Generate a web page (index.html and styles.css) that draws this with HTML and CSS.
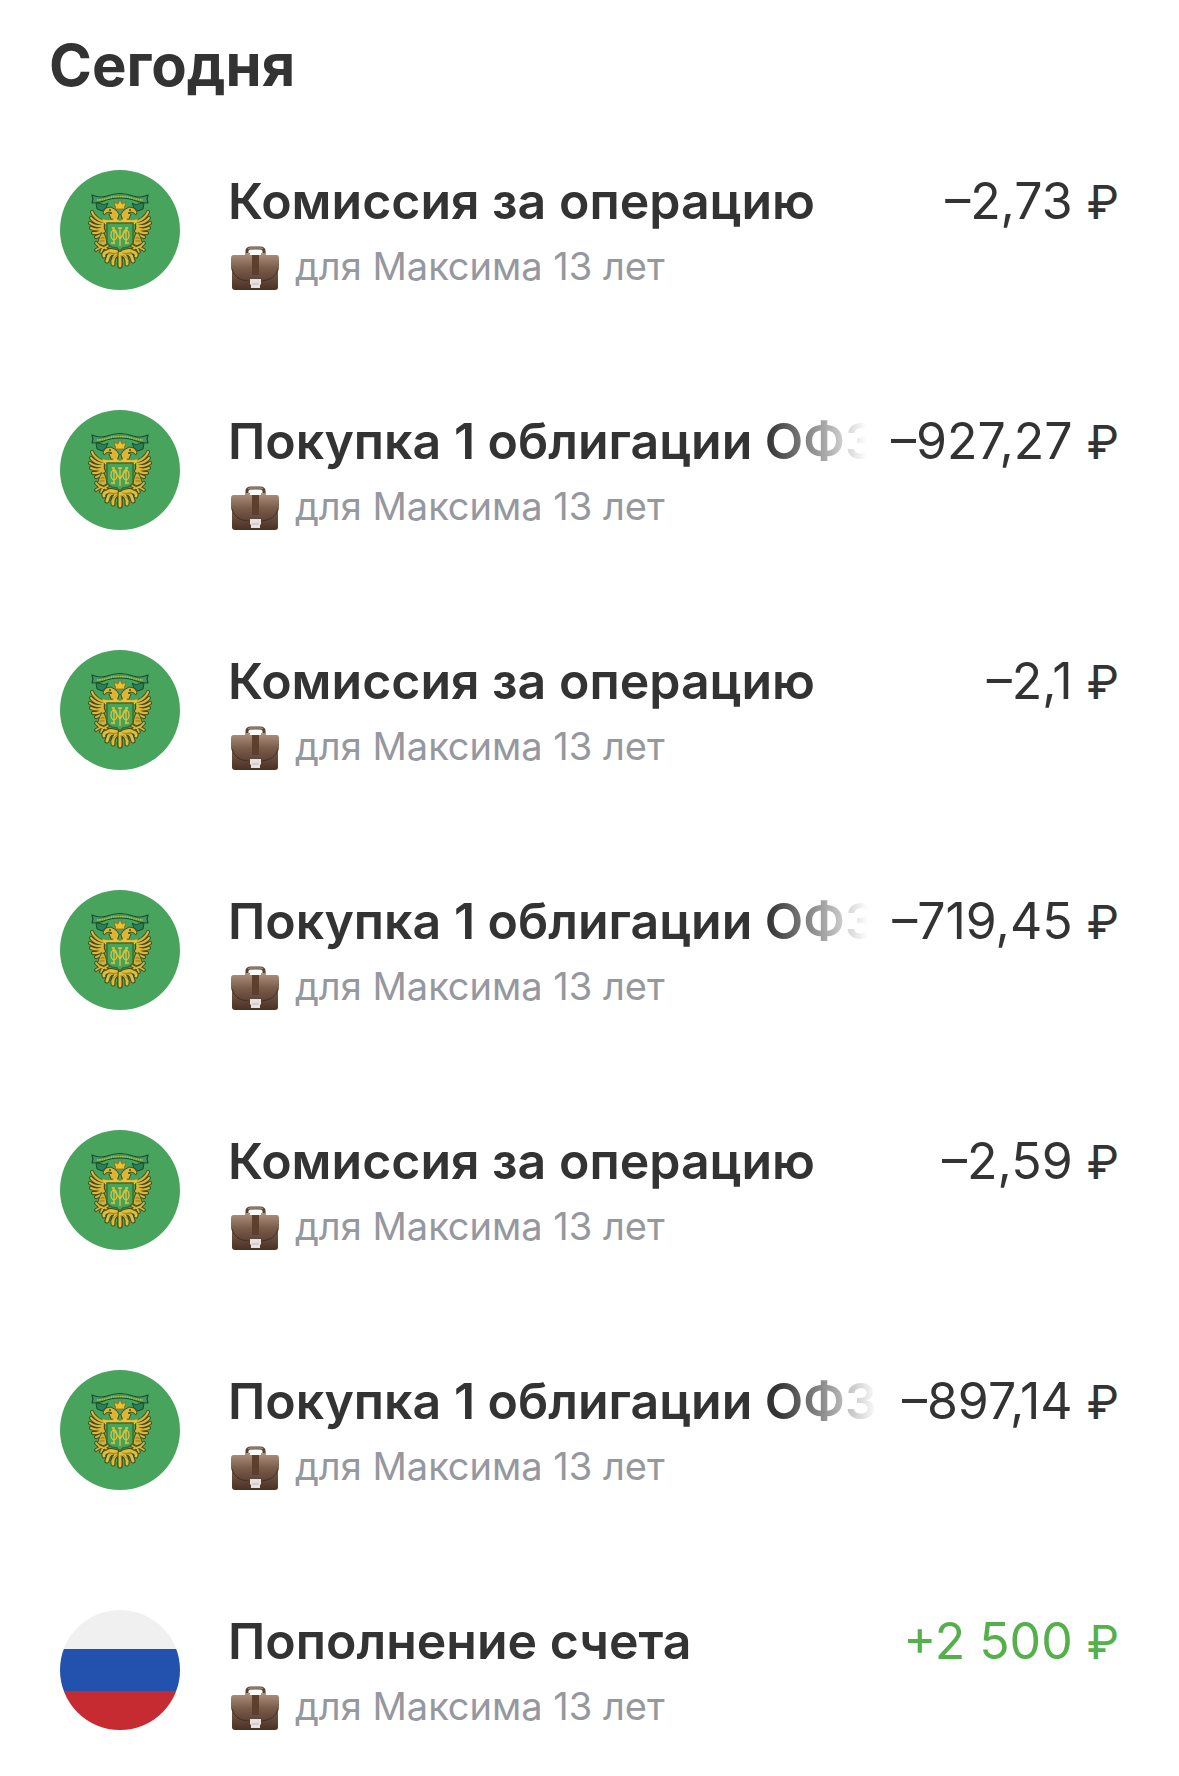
FILE: index.html
```html
<!DOCTYPE html>
<html lang="ru">
<head>
<meta charset="utf-8">
<meta name="viewport" content="width=device-width, initial-scale=1">
<title>Операции</title>
<link rel="stylesheet" href="styles.css">
</head>
<body>
<svg class="sprite" aria-hidden="true">
  <defs>
    <linearGradient id="leather" x1="0" y1="0" x2="0" y2="1">
      <stop offset="0" stop-color="#9a7f6c"/>
      <stop offset=".35" stop-color="#80614f"/>
      <stop offset="1" stop-color="#4a3126"/>
    </linearGradient>
    <linearGradient id="flap" x1="0" y1="0" x2="0" y2="1">
      <stop offset="0" stop-color="#a58c79"/>
      <stop offset=".5" stop-color="#7b5d4b"/>
      <stop offset="1" stop-color="#5d4234"/>
    </linearGradient>
    <path id="feathers" d="M44 52q-9-3-12-10M43 54q-8-1-12-6M43 56q-8 1-13-3M43 58q-6 3-12 0M43 59q-4 5-10 4M44 61q-3 5-8 6"/>
    <path id="claw" d="M49 75l-5 3-5-2-3-3M41 77l-5 3M43 78l-2 4M45 78l3 2"/>
    <path id="tail" d="M57 82q-7-3-10 0-4 1-3 4M58 83q-9-1-10 5l-1 3M58 84q-6 3-5 10M60 83v13"/>
    <g id="wing" stroke-linecap="round" stroke-linejoin="round">
      <use href="#feathers" fill="none" stroke="#3c4a1c" stroke-width="4"/>
      <use href="#feathers" fill="none" stroke="#dcb436" stroke-width="2.2"/>
      <path d="M40 66q1-4 4-3l2 5 1 6-4 2-3-2-3 1z" fill="#cfb13a" stroke="#3c4a1c" stroke-width=".9"/>
      <path d="M41 68h3M40 71h4" stroke="#6b601d" stroke-width=".7"/>
      <use href="#claw" fill="none" stroke="#3c4a1c" stroke-width="3.6"/>
      <use href="#claw" fill="none" stroke="#dcb436" stroke-width="1.8"/>
      <path d="M57 50l-6-1-2-5 3-1-3-1-3 1-2 2-1-3 3-4 5-1 5 3 3 4z" fill="#dcb436" stroke="#3c4a1c" stroke-width=".9"/>
      <circle cx="50" cy="40" r=".9" fill="#24401f"/>
      <use href="#tail" fill="none" stroke="#3c4a1c" stroke-width="5"/>
      <use href="#tail" fill="none" stroke="#e0bd3c" stroke-width="3"/>
      <path d="M57 83l-8 1M57 85l-6 5M59 86l-2 8" fill="none" stroke="#6b601d" stroke-width=".6"/>
    </g>
    <symbol id="crest" viewBox="0 0 120 120">
      <path d="M36 33q5 0 8 2l4-2-2 5-4 3-5-2z" fill="#2c8051" stroke="#174d32"/>
      <path d="M84 33q-5 0-8 2l-4-2 2 5 4 3 5-2z" fill="#2c8051" stroke="#174d32"/>
      <path d="M35 26q6 2 12 0 13-5 26 0 6 2 12 0l3-1-1 4 1 4q-8 0-14-3-14-4-28 0-6 3-14 3l1-4-1-4z" fill="#46995a" stroke="#174d32" stroke-width="1.2" stroke-linejoin="round"/>
      <path d="M37 30q6 0 11-2 12-3 24 0 5 2 11 2" fill="none" stroke="#b5ba42" stroke-width="1.6" stroke-dasharray="1.6 .7"/>
      <use href="#wing"/>
      <use href="#wing" transform="matrix(-1 0 0 1 120 0)"/>
      <path d="M56 39l-2-7 4 2 1-3h2l1 3 4-2-2 7z" fill="#efbd2f" stroke="#765a1a" stroke-width=".6"/>
      <path d="M42 49q10 3 13-1l5 3 5-3q3 4 13 1l-3 5H45z" fill="#eac13a"/>
      <path d="M47 53h26v18q0 4-5 6l-5 1-3 3-3-3-5-1q-5-2-5-6z" fill="#45a45b" stroke="#4e6521" stroke-width="1.4"/>
      <g fill="none" stroke="#e2c23d" stroke-width="1.3">
        <path d="M60 58v18M58 58h4M54 57v17M66 57v17M52 57l8 12 8-12M51 73h4M65 73h4"/>
        <ellipse cx="54" cy="65" rx="3" ry="5"/>
        <ellipse cx="66" cy="65" rx="3" ry="5"/>
      </g>
    </symbol>
    <symbol id="briefcase" viewBox="0 0 48 44">
      <path d="M16 9V5q0-3 4-3h9q4 0 4 3v4" fill="none" stroke="#55402f" stroke-width="3"/>
      <path d="M17 3q1-1 3-1h9q2 0 3 1" fill="none" stroke="#a08671" stroke-width="1.6"/>
      <path d="M14 7h5v2h-5zM30 7h5v2h-5z" fill="#a8957d"/>
      <path d="M3 9h42q2 0 2 3v29q0 3-3 3H4q-3 0-3-3V12q0-3 2-3z" fill="url(#leather)"/>
      <path d="M3 9h42q3 0 3 3v10q-3 12-17 13H17Q3 34 0 22V12q0-3 3-3z" fill="url(#flap)"/>
      <path d="M1 23q3 11 16 12h14q13-1 16-12" fill="none" stroke="#443025" stroke-width="1"/>
      <path d="M21 9h7v20h-7z" fill="#5d412f"/>
      <path d="M19 33h11v5l-1 1v3h-9v-3l-1-1z" fill="#e6e2e3"/>
      <path d="M21 38h7" stroke="#bdb7b8"/>
    </symbol>
  </defs>
</svg>

<main class="feed">
  <h1 class="feed-title">Сегодня</h1>
  <ul class="operations">
    <li class="operation">
      <svg class="logo logo-bond" aria-hidden="true"><use href="#crest"/></svg>
      <div class="details">
        <h2 class="name">Комиссия за операцию</h2>
        <p class="account"><svg class="case" aria-hidden="true"><use href="#briefcase"/></svg>для Максима 13 лет</p>
      </div>
      <span class="amount">–2,73 <span class="currency">₽</span></span>
    </li>
    <li class="operation">
      <svg class="logo logo-bond" aria-hidden="true"><use href="#crest"/></svg>
      <div class="details">
        <h2 class="name name-faded">Покупка 1 облигации ОФЗ</h2>
        <p class="account"><svg class="case" aria-hidden="true"><use href="#briefcase"/></svg>для Максима 13 лет</p>
      </div>
      <span class="amount">–927,27 <span class="currency">₽</span></span>
    </li>
    <li class="operation">
      <svg class="logo logo-bond" aria-hidden="true"><use href="#crest"/></svg>
      <div class="details">
        <h2 class="name">Комиссия за операцию</h2>
        <p class="account"><svg class="case" aria-hidden="true"><use href="#briefcase"/></svg>для Максима 13 лет</p>
      </div>
      <span class="amount">–2,1 <span class="currency">₽</span></span>
    </li>
    <li class="operation">
      <svg class="logo logo-bond" aria-hidden="true"><use href="#crest"/></svg>
      <div class="details">
        <h2 class="name name-faded">Покупка 1 облигации ОФЗ</h2>
        <p class="account"><svg class="case" aria-hidden="true"><use href="#briefcase"/></svg>для Максима 13 лет</p>
      </div>
      <span class="amount">–719,45 <span class="currency">₽</span></span>
    </li>
    <li class="operation">
      <svg class="logo logo-bond" aria-hidden="true"><use href="#crest"/></svg>
      <div class="details">
        <h2 class="name">Комиссия за операцию</h2>
        <p class="account"><svg class="case" aria-hidden="true"><use href="#briefcase"/></svg>для Максима 13 лет</p>
      </div>
      <span class="amount">–2,59 <span class="currency">₽</span></span>
    </li>
    <li class="operation">
      <svg class="logo logo-bond" aria-hidden="true"><use href="#crest"/></svg>
      <div class="details">
        <h2 class="name name-faded">Покупка 1 облигации ОФЗ</h2>
        <p class="account"><svg class="case" aria-hidden="true"><use href="#briefcase"/></svg>для Максима 13 лет</p>
      </div>
      <span class="amount">–897,14 <span class="currency">₽</span></span>
    </li>
    <li class="operation">
      <svg class="logo" viewBox="0 0 120 120" aria-hidden="true">
        <path fill="#f0f0f0" d="M0 0h120v39H0z"/>
        <path fill="#2252ae" d="M0 39h120v42H0z"/>
        <path fill="#c52b30" d="M0 81h120v39H0z"/>
      </svg>
      <div class="details">
        <h2 class="name">Пополнение счета</h2>
        <p class="account"><svg class="case" aria-hidden="true"><use href="#briefcase"/></svg>для Максима 13 лет</p>
      </div>
      <span class="amount amount-income">+2 500 <span class="currency">₽</span></span>
    </li>
  </ul>
</main>
</body>
</html>
```

FILE: styles.css
```css
* {
  box-sizing: border-box;
}

body {
  margin: 0;
  background: #fff;
  color: #333;
  font-family: Inter, "Liberation Sans", sans-serif;
}

.sprite {
  display: block;
  width: 0;
  height: 0;
}

.feed {
  padding: 30px 60px 46px 49px;
}

.feed-title {
  margin: 0 0 70px;
  font-size: 58px;
  line-height: 70px;
  font-weight: 700;
}

.operations {
  display: flex;
  flex-direction: column;
  gap: 120px;
  margin: 0;
  padding: 0 0 0 11px;
  list-style: none;
}

.operation {
  display: flex;
  align-items: flex-start;
}

.logo {
  flex: none;
  width: 120px;
  height: 120px;
  margin-right: 48px;
  border-radius: 50%;
}

.logo-bond {
  background: #48a35c;
}

.details {
  flex: 1;
  min-width: 0;
}

.name {
  margin: 0;
  overflow: hidden;
  font-size: 50px;
  line-height: 62px;
  font-weight: 600;
  white-space: nowrap;
}

.name-faded {
  -webkit-mask-image: linear-gradient(to left, transparent, #000 100px);
  mask-image: linear-gradient(to left, transparent, #000 100px);
}

.account {
  display: flex;
  align-items: flex-end;
  gap: 16px;
  margin: 10px 0 0;
  color: #96989d;
  font-size: 38px;
  line-height: 48px;
  white-space: nowrap;
}

.case {
  flex: none;
  width: 48px;
  height: 44px;
  margin-left: 3px;
}

.amount {
  flex: none;
  margin-left: 24px;
  font-size: 50px;
  line-height: 62px;
  white-space: nowrap;
}

.currency {
  font-size: 46px;
}

.amount-income {
  color: #55b04b;
}
```
